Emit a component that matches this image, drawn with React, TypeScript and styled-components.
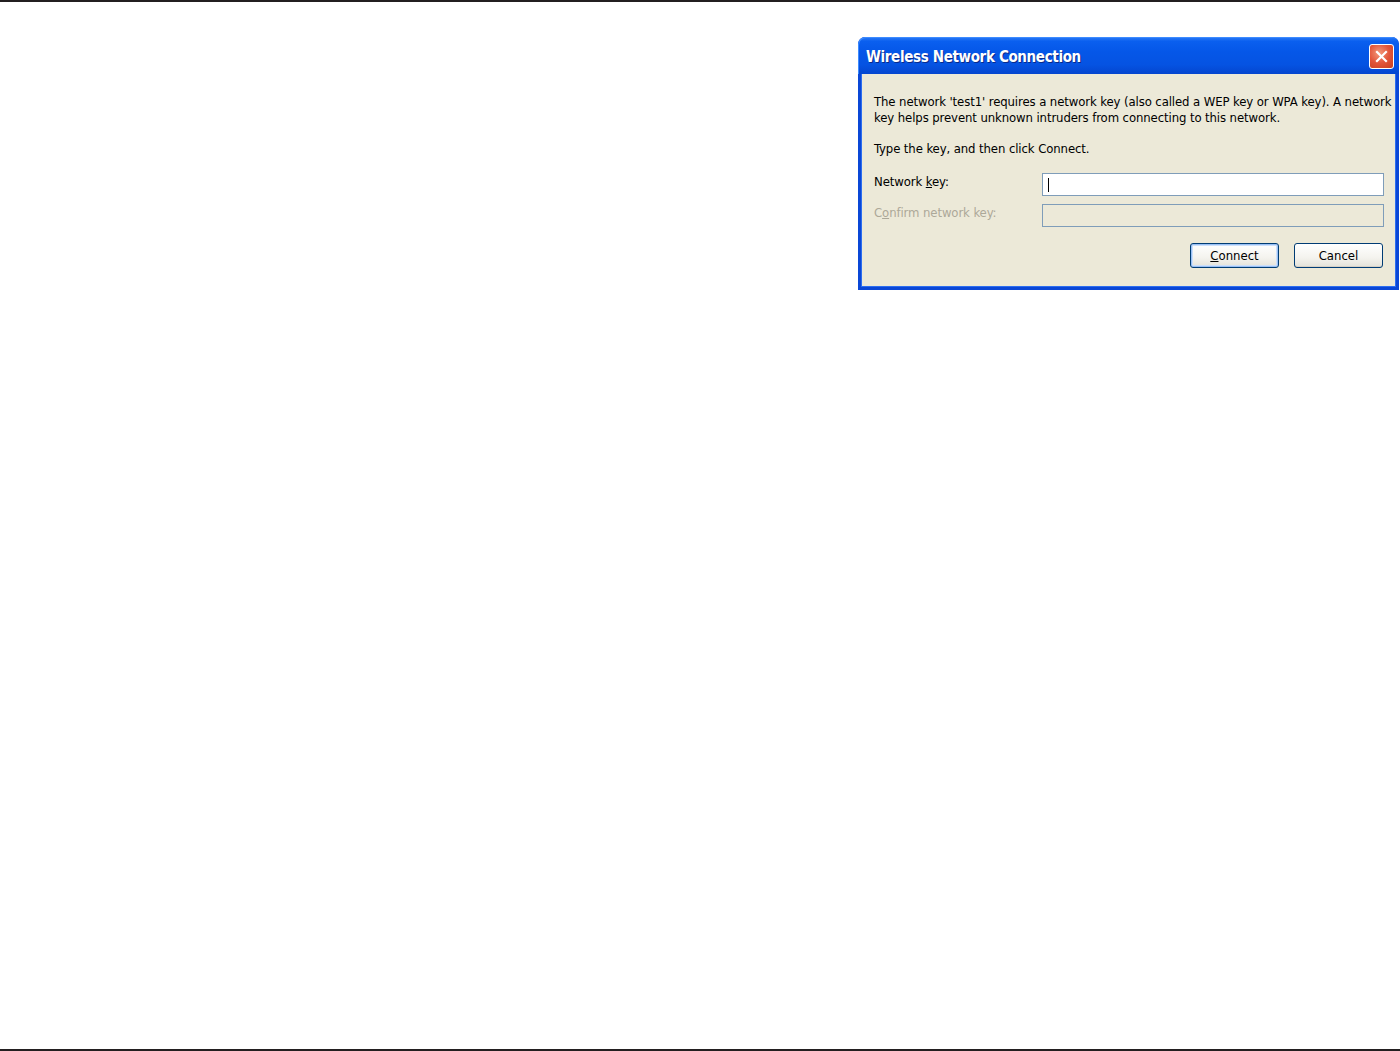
import React from "react";
import styled, { createGlobalStyle } from "styled-components";

const Global = createGlobalStyle`
  html, body { margin: 0; padding: 0; background: #fff; }
  body { font-family: Tahoma, "DejaVu Sans", "Liberation Sans", sans-serif; }
`;

const Page = styled.div`
  width: 1400px;
  height: 1051px;
  display: flex;
  flex-direction: column;
  background: #fff;
  overflow: hidden;
`;

const Rule = styled.div<{ $top?: boolean }>`
  height: 2px;
  background: #231f20;
  flex: none;
  margin-top: ${(p) => (p.$top ? "0" : "auto")};
`;

const Window = styled.div`
  margin: 35px 0 0 858px;
  width: 541px;
  height: 253px;
  display: flex;
  flex-direction: column;
  border-radius: 7px 7px 0 0;
  background: #0a47d6;
  overflow: hidden;
`;

const TitleBar = styled.div`
  height: 37px;
  flex: none;
  display: flex;
  align-items: center;
  justify-content: space-between;
  padding: 0 5px 0 8px;
  background: linear-gradient(
    180deg,
    #2a7bf6 0%,
    #0a5fef 12%,
    #0557e8 40%,
    #0553e2 75%,
    #0446cf 100%
  );
  border-radius: 7px 7px 0 0;
  box-shadow: inset 1px 1px 0 #3d8bff;
`;

const Title = styled.span`
  color: #fff;
  font-family: "DejaVu Sans Condensed", "DejaVu Sans", sans-serif;
  font-weight: bold;
  font-size: 15px;
  letter-spacing: -0.35px;
  text-shadow: 1px 1px 0 #0a2a8a;
  margin-top: 2px;
`;

const CloseButton = styled.div`
  width: 23px;
  height: 23px;
  border: 1px solid #fff;
  border-radius: 3px;
  background: radial-gradient(circle at 40% 35%, #f39a7c 0%, #e2553a 50%, #c8401f 100%);
  display: flex;
  align-items: center;
  justify-content: center;
  margin-top: 1px;
`;

const Body = styled.div`
  flex: 1;
  margin: 0 3px 3px 3px;
  background: #ece9d8;
  padding: 20px 0 0 12px;
  display: flex;
  flex-direction: column;
  border-left: 1px solid #2c6ef0;
  border-right: 1px solid #2c6ef0;
  border-bottom: 1px solid #2c6ef0;
`;

const Text = styled.p`
  margin: 0;
  font-family: "DejaVu Sans Condensed", "DejaVu Sans", sans-serif;
  font-size: 13px;
  line-height: 16px;
  color: #000;
  white-space: nowrap;
  letter-spacing: -0.1px;
`;

const Instruction = styled(Text)`
  margin-top: 15px;
`;

const Form = styled.div`
  margin-top: 16px;
  display: grid;
  grid-template-columns: 168px 342px;
  row-gap: 8px;
  align-items: center;
`;

const Label = styled.span<{ $disabled?: boolean }>`
  font-family: "DejaVu Sans Condensed", "DejaVu Sans", sans-serif;
  font-size: 13px;
  color: ${(p) => (p.$disabled ? "#aca899" : "#000")};
  letter-spacing: -0.1px;
  margin-top: -6px;
`;

const Field = styled.div<{ $disabled?: boolean }>`
  height: 21px;
  border: 1px solid #7f9db9;
  background: ${(p) => (p.$disabled ? "#ece9d8" : "#fff")};
  display: flex;
  align-items: center;
  padding-left: 5px;
`;

const Caret = styled.span`
  width: 1px;
  height: 14px;
  background: #000;
`;

const Buttons = styled.div`
  display: flex;
  justify-content: flex-end;
  gap: 15px;
  margin-top: 16px;
  padding-right: 12px;
`;

const Button = styled.div<{ $default?: boolean }>`
  width: 89px;
  height: 25px;
  box-sizing: border-box;
  border: 1px solid #003c74;
  border-radius: 3px;
  background: linear-gradient(180deg, #ffffff 0%, #f4f3ee 60%, #e3e2d9 100%);
  box-shadow: ${(p) =>
    p.$default ? "inset 0 0 0 1px #99c0f5, inset 0 0 0 2px #cde0fa" : "inset 0 -1px 0 #d6d0c5"};
  display: flex;
  align-items: center;
  justify-content: center;
  font-family: "DejaVu Sans Condensed", "DejaVu Sans", sans-serif;
  font-size: 13px;
  color: #000;
`;

const U = styled.span`
  text-decoration: underline;
`;

export default function App() {
  return (
    <Page>
      <Global />
      <Rule $top />
      <Window>
        <TitleBar>
          <Title>Wireless Network Connection</Title>
          <CloseButton>
            <svg width="13" height="13" viewBox="0 0 13 13">
              <path d="M2 2 L11 11 M11 2 L2 11" stroke="#fff" strokeWidth="2.2" strokeLinecap="square" />
            </svg>
          </CloseButton>
        </TitleBar>
        <Body>
          <Text>
            The network 'test1' requires a network key (also called a WEP key or WPA key). A network
            <br />
            key helps prevent unknown intruders from connecting to this network.
          </Text>
          <Instruction>Type the key, and then click Connect.</Instruction>
          <Form>
            <Label>
              Network <U>k</U>ey:
            </Label>
            <Field>
              <Caret />
            </Field>
            <Label $disabled>
              C<U>o</U>nfirm network key:
            </Label>
            <Field $disabled />
          </Form>
          <Buttons>
            <Button $default>
              <U>C</U>onnect
            </Button>
            <Button>Cancel</Button>
          </Buttons>
        </Body>
      </Window>
      <Rule />
    </Page>
  );
}
